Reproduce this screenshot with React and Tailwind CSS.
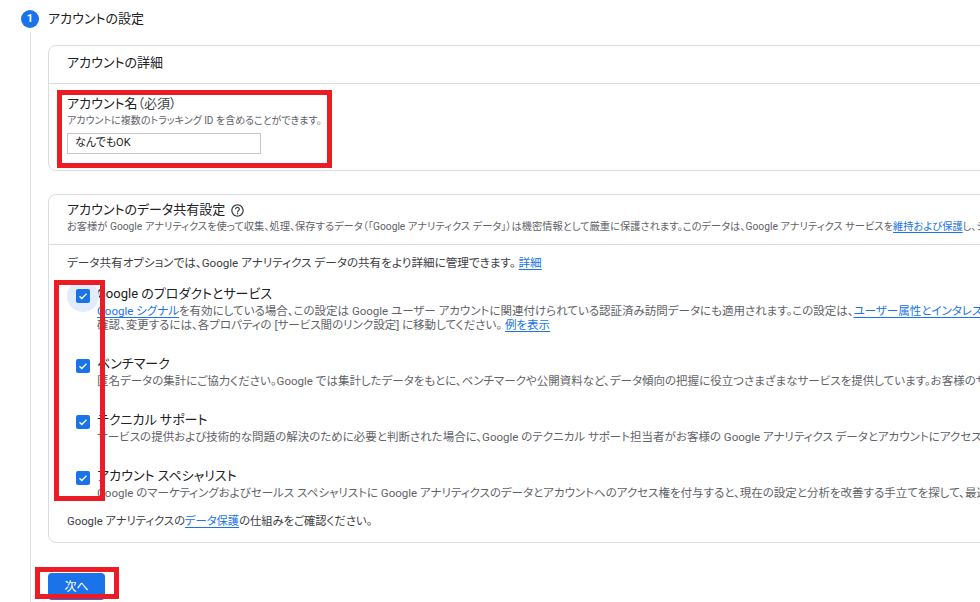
import React from "react";

const HelpIcon = () => (
  <svg viewBox="0 0 24 24" className="w-[15px] h-[15px] fill-[#3c4043]">
    <path d="M11 18h2v-2h-2v2zm1-16C6.48 2 2 6.48 2 12s4.48 10 10 10 10-4.48 10-10S17.52 2 12 2zm0 18c-4.41 0-8-3.590-8-8s3.59-8 8-8 8 3.59 8 8-3.59 8-8 8zm0-14c-2.21 0-4 1.79-4 4h2c0-1.1.9-2 2-2s2 .9 2 2c0 2-3 1.75-3 5h2c0-2.250 3-2.5 3-5 0-2.21-1.79-4-4-4z" />
  </svg>
);

const Check = ({ halo }) => (
  <div className="relative mt-[5px] w-[14px] h-[14px] shrink-0">
    {halo && (
      <div className="absolute left-[-9px] top-[-9px] w-[32px] h-[32px] rounded-full bg-[#e3ecfb]" />
    )}
    <div className="relative w-[14px] h-[14px] rounded-[2px] bg-[#1a73e8] flex items-center justify-center">
      <svg viewBox="0 0 24 24" className="w-[12px] h-[12px]">
        <path d="M5 12.5l4.5 4.5L19 7.5" fill="none" stroke="white" strokeWidth="2.6" />
      </svg>
    </div>
  </div>
);

const Link = ({ children }) => (
  <span className="text-[#1a73e8] underline underline-offset-2">{children}</span>
);

const Option = ({ title, lines, halo }) => (
  <div className="flex gap-[7px] pl-[9px]">
    <Check halo={halo} />
    <div>
      <div className="text-[13px] leading-[20px] text-[#202124] whitespace-nowrap">{title}</div>
      {lines.map((l, i) => (
        <div key={i} className="text-[11.5px] leading-[14px] text-[#5f6368] whitespace-nowrap">
          {l}
        </div>
      ))}
    </div>
  </div>
);

export default function App() {
  return (
    <div className="relative w-[980px] h-[602px] overflow-hidden bg-white font-['Roboto','Noto_Sans_CJK_JP',sans-serif] [font-feature-settings:'palt']">
      {/* step header */}
      <div className="flex items-center pt-[10px] pl-[21px] gap-[9px]">
        <div className="w-[18px] h-[18px] rounded-full bg-[#1a73e8] text-white text-[11px] font-bold flex items-center justify-center">
          1
        </div>
        <div className="text-[13px] leading-[18px] text-[#202124]">アカウントの設定</div>
      </div>

      <div className="flex pl-[30px] mt-[4px]">
        <div className="w-px bg-[#dadce0] h-[600px] shrink-0" />
        <div className="ml-[17px] pt-[13px] w-[1100px] shrink-0">
          {/* card 1 */}
          <div className="border border-[#dadce0] rounded-lg">
            <div className="h-[38px] pl-[18px] pt-[7px] text-[13px] text-[#202124] border-b border-[#dadce0]">
              アカウントの詳細
            </div>
            <div className="pl-[18px] pt-[12px] pb-[16px]">
              <div className="text-[13px] leading-[16px] text-[#202124]">
                アカウント名<span className="text-[#3c4043]">（必須）</span>
              </div>
              <div className="mt-[2px] text-[10px] leading-[13px] text-[#5f6368]">
                アカウントに複数のトラッキング ID を含めることができます。
              </div>
              <div className="mt-[6px] w-[194px] h-[21px] border border-[#c6c6c6] flex items-center pl-[7px] text-[11px] text-[#202124]">
                なんでもOK
              </div>
            </div>
          </div>

          {/* card 2 */}
          <div className="mt-[23px] border border-[#dadce0] rounded-lg">
            <div className="pl-[18px] pt-[5px] pb-[10px] border-b border-[#dadce0]">
              <div className="flex items-center gap-[5px] text-[13px] leading-[20px] text-[#202124]">
                アカウントのデータ共有設定
                <HelpIcon />
              </div>
              <div className="text-[10.25px] leading-[14px] text-[#5f6368] whitespace-nowrap">
                お客様が Google アナリティクスを使って収集、処理、保存するデータ（「Google アナリティクス データ」）は機密情報として厳重に保護されます。このデータは、Google アナリティクス サービスを<Link>維持および保護</Link>し、システムの重要な運用をサポートするために使用されます。
              </div>
            </div>
            <div className="pl-[18px] pt-[10px] pb-[12px]">
              <div className="text-[11.6px] leading-[16px] text-[#3c4043]">
                データ共有オプションでは、Google アナリティクス データの共有をより詳細に管理できます。 <Link>詳細</Link>
              </div>
              <div className="mt-[13px] flex flex-col gap-[22px]">
                <Option
                  halo
                  title="Google のプロダクトとサービス"
                  lines={[
                    <>
                      <Link>Google シグナル</Link>を有効にしている場合、この設定は Google ユーザー アカウントに関連付けられている認証済み訪問データにも適用されます。この設定は、<Link>ユーザー属性とインタレスト カテゴリ</Link>のレポートにも必要です。
                    </>,
                    <>
                      確認、変更するには、各プロパティの [サービス間のリンク設定] に移動してください。 <Link>例を表示</Link>
                    </>,
                  ]}
                />
                <Option
                  title="ベンチマーク"
                  lines={[
                    "匿名データの集計にご協力ください。Google では集計したデータをもとに、ベンチマークや公開資料など、データ傾向の把握に役立つさまざまなサービスを提供しています。お客様のサイトを特定できる情報はすべて削除されます。",
                  ]}
                />
                <Option
                  title="テクニカル サポート"
                  lines={[
                    "サービスの提供および技術的な問題の解決のために必要と判断された場合に、Google のテクニカル サポート担当者がお客様の Google アナリティクス データとアカウントにアクセスすることを許可します。",
                  ]}
                />
                <Option
                  title="アカウント スペシャリスト"
                  lines={[
                    "Google のマーケティングおよびセールス スペシャリストに Google アナリティクスのデータとアカウントへのアクセス権を付与すると、現在の設定と分析を改善する手立てを探して、最適化のヒントをお届けします。",
                  ]}
                />
              </div>
              <div className="mt-[14px] text-[11.3px] leading-[16px] text-[#3c4043]">
                Google アナリティクスの<Link>データ保護</Link>の仕組みをご確認ください。
              </div>
            </div>
          </div>

          <button className="mt-[30px] w-[57px] h-[27px] rounded-[4px] bg-[#1a73e8] text-white text-[12px]">
            次へ
          </button>
        </div>
      </div>

      {/* red annotation boxes */}
      <div className="absolute left-[57px] top-[90px] w-[275px] h-[78px] border-[5px] border-[#ec1c24]" />
      <div className="absolute left-[54px] top-[280px] w-[51px] h-[221px] border-[5px] border-[#ec1c24]" />
      <div className="absolute left-[35px] top-[567px] w-[84px] h-[32px] border-[5px] border-[#ec1c24]" />
    </div>
  );
}
